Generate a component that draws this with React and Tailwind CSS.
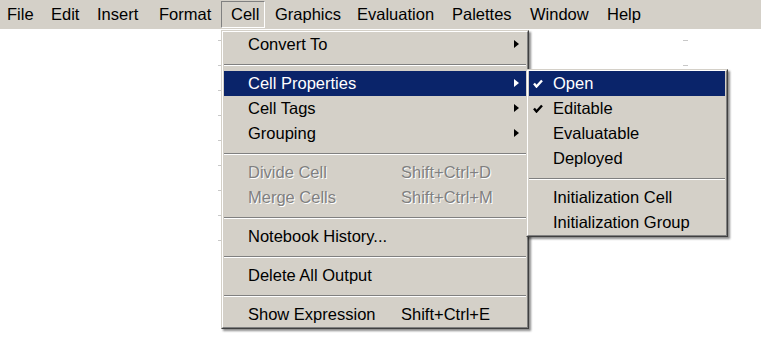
import React from 'react';

const FONT = { fontFamily: '"Liberation Sans", Arial, sans-serif' };

const BAR_ITEMS = [
    { label: 'File', w: 'w-[41px]', pl: 'pl-[6px]' },
    { label: 'Edit', w: 'w-[46px]', pl: 'pl-[9px]' },
    { label: 'Insert', w: 'w-[62px]', pl: 'pl-[9px]' },
    { label: 'Format', w: 'w-[72px]', pl: 'pl-[9px]' },
    { label: 'Cell', w: 'w-[44px]', pl: 'pl-[9px]', open: true },
    { label: 'Graphics', w: 'w-[82px]', pl: 'pl-[9px]' },
    { label: 'Evaluation', w: 'w-[95px]', pl: 'pl-[9px]' },
    { label: 'Palettes', w: 'w-[78px]', pl: 'pl-[9px]' },
    { label: 'Window', w: 'w-[77px]', pl: 'pl-[9px]' },
    { label: 'Help', w: 'w-[53px]', pl: 'pl-[9px]' },
];

// main Cell menu rows, 'sep' marks a divider
const CELL_MENU = [
    { label: 'Convert To', sub: true },
    'sep',
    { label: 'Cell Properties', sub: true, active: true },
    { label: 'Cell Tags', sub: true },
    { label: 'Grouping', sub: true },
    'sep',
    { label: 'Divide Cell', key: 'Shift+Ctrl+D', disabled: true },
    { label: 'Merge Cells', key: 'Shift+Ctrl+M', disabled: true },
    'sep',
    { label: 'Notebook History...' },
    'sep',
    { label: 'Delete All Output' },
    'sep',
    { label: 'Show Expression', key: 'Shift+Ctrl+E' },
];

const PROPS_MENU = [
    { label: 'Open', checked: true, active: true },
    { label: 'Editable', checked: true },
    { label: 'Evaluatable' },
    { label: 'Deployed' },
    'sep',
    { label: 'Initialization Cell' },
    { label: 'Initialization Group' },
];

function Separator() {
    return (
        <div className="h-[14px] pt-[7px]">
            <div className="h-[2px] border-t border-b border-t-[#808080] border-b-white"></div>
        </div>
    );
}

function Check({ light }) {
    return (
        <svg width="10" height="9" viewBox="0 0 10 9" className="absolute left-[4px] top-[8px]">
            <polyline points="1,4.5 3.5,7.5 9,1.5" fill="none" stroke={light ? '#ffffff' : '#000000'} strokeWidth="2.4" />
        </svg>
    );
}

function MenuPanel({ className, children }) {
    return (
        <div className={`absolute border border-t-[#d4d0c8] border-l-[#d4d0c8] border-r-[#404040] border-b-[#404040] bg-[#d4d0c8] shadow-[2px_2px_2px_rgba(0,0,0,0.45)] ${className}`}>
            <div className="border border-t-white border-l-white border-r-[#808080] border-b-[#808080] px-[1px]">
                {children}
            </div>
        </div>
    );
}

export default function App() {
    return (
        <div className="relative w-[761px] h-[346px] bg-white overflow-hidden text-[16.5px] text-black" style={FONT}>
            {/* menu bar */}
            <div className="flex h-[29px] bg-[#d4d0c8]">
                {BAR_ITEMS.map(item => (
                    <div
                        key={item.label}
                        className={`${item.w} ${item.pl} mt-[1px] h-[27px] flex items-center border whitespace-nowrap ${item.open ? 'border-t-[#808080] border-l-[#808080] border-r-white border-b-white' : 'border-transparent'}`}
                    >
                        {item.label}
                    </div>
                ))}
            </div>

            {/* faint marks of the notebook behind the menus */}
            <div className="absolute left-[218px] top-[40px] flex flex-col gap-[24px]">
                {[0, 1, 2, 3, 4, 5, 6, 7, 8].map(i => (
                    <div key={i} className="w-[3px] h-[1px] bg-[#c8c8c8]"></div>
                ))}
            </div>
            <div className="absolute left-[683px] top-[40px] flex flex-col gap-[24px]">
                <div className="w-[5px] h-[1px] bg-[#c8c8c8]"></div>
                <div className="w-[5px] h-[1px] bg-[#c8c8c8]"></div>
            </div>

            {/* Cell menu */}
            <MenuPanel className="left-[221px] top-[30px] w-[308px]">
                {CELL_MENU.map((row, i) => row === 'sep' ? (
                    <Separator key={i} />
                ) : (
                    <div
                        key={i}
                        className={`relative flex items-center h-[25px] pl-[24px] ${row.active ? 'bg-[#0a246a] text-white' : ''} ${row.disabled ? 'text-[#808080] [text-shadow:1px_1px_0_#ffffff]' : ''}`}
                    >
                        <span className="w-[153px] whitespace-nowrap">{row.label}</span>
                        {row.key && <span className="whitespace-nowrap">{row.key}</span>}
                        {row.sub && (
                            <span className={`absolute right-[7px] top-[8px] w-0 h-0 border-y-[4px] border-y-transparent border-l-[5px] ${row.active ? 'border-l-white' : 'border-l-black'}`}></span>
                        )}
                    </div>
                ))}
            </MenuPanel>

            {/* Cell Properties submenu */}
            <MenuPanel className="left-[526px] top-[69px] w-[202px]">
                {PROPS_MENU.map((row, i) => row === 'sep' ? (
                    <Separator key={i} />
                ) : (
                    <div
                        key={i}
                        className={`relative flex items-center h-[25px] pl-[24px] whitespace-nowrap ${row.active ? 'bg-[#0a246a] text-white' : ''}`}
                    >
                        {row.checked && <Check light={row.active} />}
                        {row.label}
                    </div>
                ))}
            </MenuPanel>
        </div>
    );
}
